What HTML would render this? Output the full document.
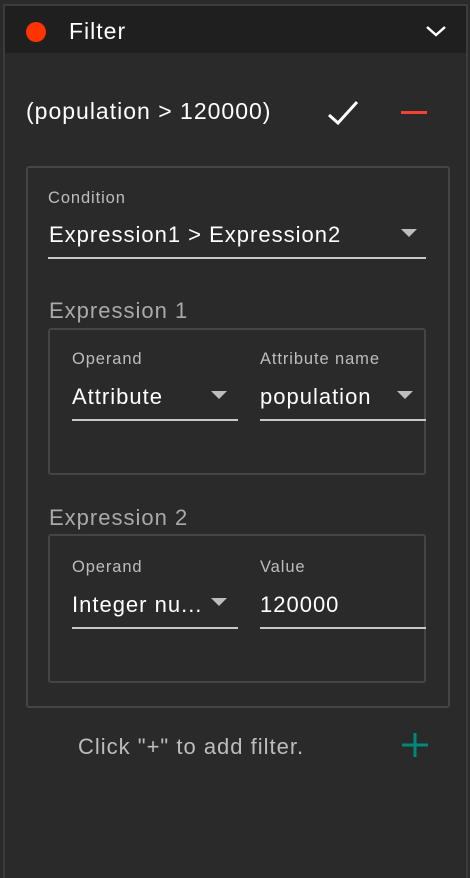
<!DOCTYPE html>
<html><head><style>
*{margin:0;padding:0;box-sizing:border-box}
body{width:470px;height:878px;background:#2a2a2a;font-family:"Liberation Sans",sans-serif;position:relative;overflow:hidden}
.a{position:absolute;white-space:nowrap}
.frame{position:absolute;left:3px;top:4px;width:465px;height:874px;border:2px solid #3c3c3c;border-bottom:none}
.hdr{position:absolute;left:5px;top:6px;width:461px;height:47px;background:#1f1f1f}
.box{position:absolute;border:2px solid #454545;border-radius:3px}
.lbl{font-size:16.5px;color:#bdbdbd;letter-spacing:0.9px}
.val{font-size:22px;color:#fff;letter-spacing:1px}
.ul{position:absolute;height:2px;background:#c8c8c8}
.tri{position:absolute;width:0;height:0;border-left:8px solid transparent;border-right:8px solid transparent;border-top:8px solid #bdbdbd}
</style></head><body>
<div class="frame"></div>
<div class="hdr"></div>
<div class="a" style="left:26px;top:22px;width:20px;height:20px;border-radius:50%;background:#ff3300"></div>
<div class="a val" style="left:69px;top:18px;font-size:23px">Filter</div>
<svg class="a" style="left:425px;top:24px" width="22" height="14"><path d="M2 3 L11 11 L20 3" stroke="#fff" stroke-width="2.5" fill="none"/></svg>
<div class="a val" style="left:26px;top:98px;font-size:23px">(population &gt; 120000)</div>
<svg class="a" style="left:326px;top:99px" width="34" height="28"><path d="M3 16 L12 24 L31 3" stroke="#fff" stroke-width="3" fill="none"/></svg>
<div class="a" style="left:401px;top:111px;width:26px;height:3px;background:#f44336"></div>

<div class="box" style="left:26px;top:166px;width:424px;height:542px"></div>
<div class="a lbl" style="left:48px;top:189px">Condition</div>
<div class="a val" style="left:49px;top:222px">Expression1 &gt; Expression2</div>
<div class="tri" style="left:401px;top:229px"></div>
<div class="ul" style="left:48px;top:257px;width:378px"></div>

<div class="a val" style="left:49px;top:298px;color:#aaa">Expression 1</div>
<div class="box" style="left:48px;top:328px;width:378px;height:147px"></div>
<div class="a lbl" style="left:72px;top:350px">Operand</div>
<div class="a val" style="left:72px;top:384px">Attribute</div>
<div class="tri" style="left:211px;top:391px"></div>
<div class="ul" style="left:72px;top:419px;width:166px"></div>
<div class="a lbl" style="left:260px;top:350px">Attribute name</div>
<div class="a val" style="left:260px;top:384px">population</div>
<div class="tri" style="left:397px;top:391px"></div>
<div class="ul" style="left:260px;top:419px;width:166px"></div>

<div class="a val" style="left:49px;top:505px;color:#aaa">Expression 2</div>
<div class="box" style="left:48px;top:534px;width:378px;height:149px"></div>
<div class="a lbl" style="left:72px;top:558px">Operand</div>
<div class="a val" style="left:72px;top:592px">Integer nu...</div>
<div class="tri" style="left:211px;top:598px"></div>
<div class="ul" style="left:72px;top:627px;width:166px"></div>
<div class="a lbl" style="left:260px;top:558px">Value</div>
<div class="a val" style="left:260px;top:592px">120000</div>
<div class="ul" style="left:260px;top:627px;width:166px"></div>

<div class="a val" style="left:78px;top:734px;color:#bdbdbd">Click "+" to add filter.</div>
<svg class="a" style="left:401px;top:732px" width="28" height="26"><path d="M14 1 V25 M1 13 H27" stroke="#00897b" stroke-width="3" fill="none"/></svg>
</body></html>
